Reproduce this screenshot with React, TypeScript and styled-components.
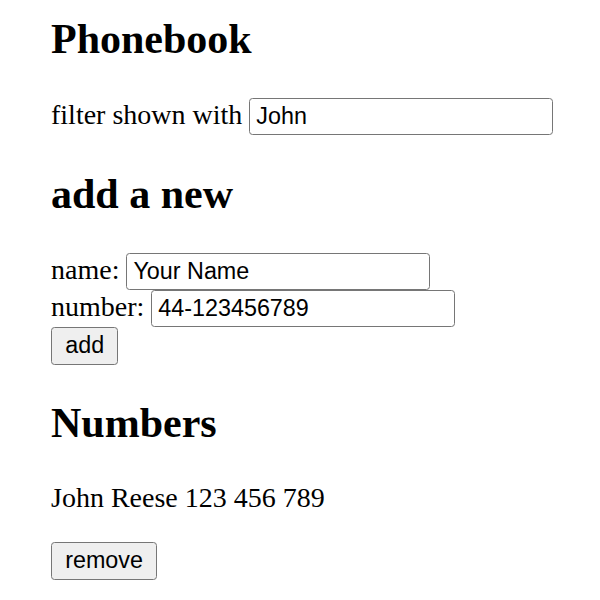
import React from "react";
import styled, { createGlobalStyle } from "styled-components";

const GlobalStyle = createGlobalStyle`
  html, body {
    margin: 0;
    padding: 0;
    background: #ffffff;
  }
  body {
    font-family: "Liberation Serif", "Times New Roman", serif;
    font-size: 28px;
    color: #000000;
  }
`;

const Page = styled.div`
  padding: 0 0 0 51px;
`;

const Heading = styled.h2`
  font-family: "Liberation Serif", "Times New Roman", serif;
  font-size: 42px;
  font-weight: bold;
  margin: 34.86px 0;
  &:first-child {
    margin-top: 14.8px;
  }
`;

const Row = styled.div`
  font-size: 28px;
`;

const Field = styled.input`
  box-sizing: border-box;
  width: 304px;
  font-family: "Liberation Sans", Arial, sans-serif;
  font-size: 23.33px;
  color: #000000;
  padding: 4.15px 6px;
  border: 1px solid #767676;
  border-radius: 3.5px;
  background: #ffffff;
  margin: 0;
  outline: none;
`;

const Button = styled.button`
  font-family: "Liberation Sans", Arial, sans-serif;
  font-size: 23.33px;
  color: #000000;
  background: #efefef;
  border: 1px solid #767676;
  border-radius: 3.5px;
  padding: 4.15px 13.2px;
  margin: 0;
  cursor: pointer;
`;

const Entry = styled.p`
  margin: 28px 0;
`;

export default function App() {
  return (
    <>
      <GlobalStyle />
      <Page>
        <Heading>Phonebook</Heading>
        <Row>
          filter shown with <Field defaultValue="John" />
        </Row>
        <Heading>add a new</Heading>
        <form onSubmit={(e) => e.preventDefault()}>
          <Row>
            name: <Field defaultValue="Your Name" />
          </Row>
          <Row>
            number: <Field defaultValue="44-123456789" />
          </Row>
          <Row>
            <Button type="submit">add</Button>
          </Row>
        </form>
        <Heading>Numbers</Heading>
        <div>
          <Entry>John Reese 123 456 789</Entry>
          <Button>remove</Button>
        </div>
      </Page>
    </>
  );
}
